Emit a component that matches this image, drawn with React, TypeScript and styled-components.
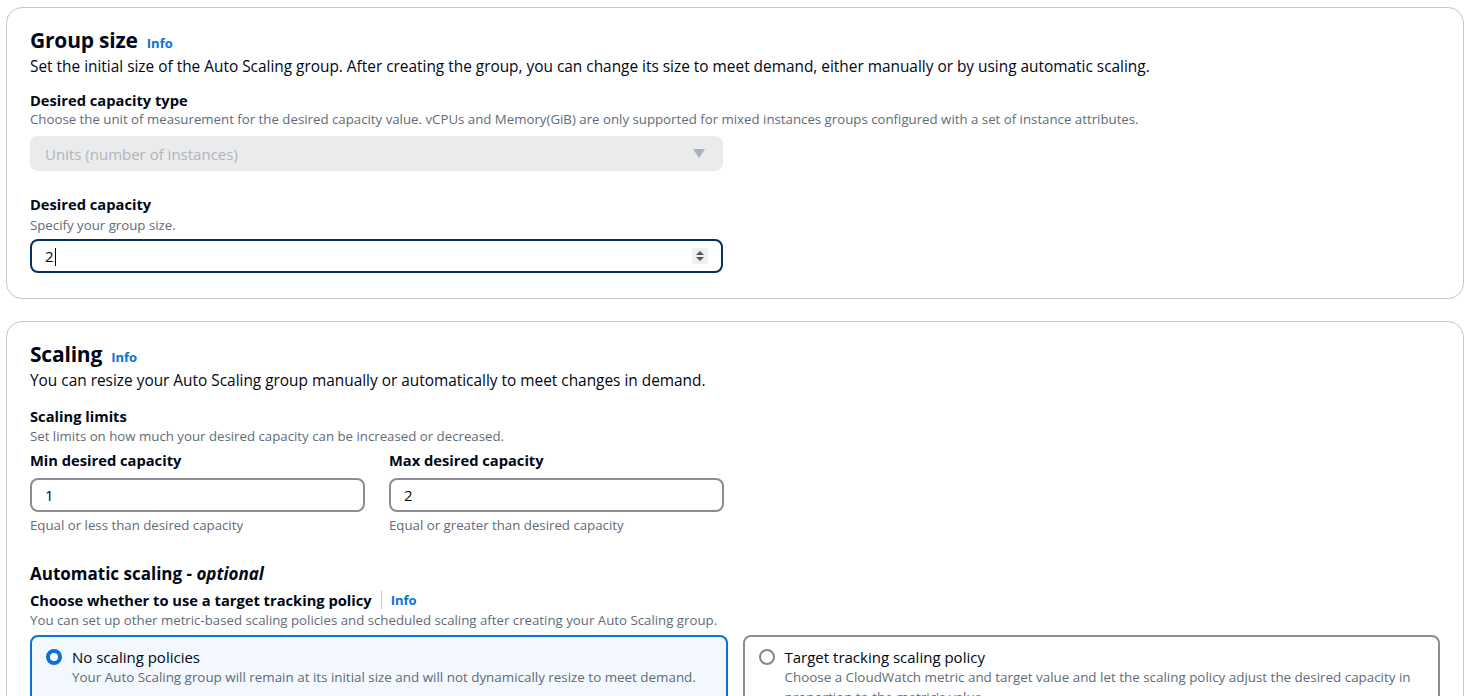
import React from "react";
import styled, { createGlobalStyle } from "styled-components";

const Global = createGlobalStyle`
  html, body {
    margin: 0;
    padding: 0;
    background: #ffffff;
    font-family: "Open Sans", "Liberation Sans", sans-serif;
    color: #000716;
  }
  * { box-sizing: border-box; }
`;

const Page = styled.div`
  padding: 7px 11px 0 6px;
  display: flex;
  flex-direction: column;
  gap: 22px;
  height: 696px;
  overflow: hidden;
`;

const Card = styled.section`
  border: 1px solid #c6c6cd;
  border-radius: 16px;
  padding: 19px 23px 25px 23px;
  background: #fff;
  flex-shrink: 0;
`;

const HeadRow = styled.div`
  display: flex;
  align-items: baseline;
  gap: 9px;
`;

const Heading = styled.h2`
  margin: 0;
  font-size: 21px;
  line-height: 26px;
  font-weight: 700;
  letter-spacing: -0.2px;
`;

const InfoLink = styled.a`
  color: #0972d3;
  font-size: 13px;
  font-weight: 700;
  text-decoration: none;
`;

const Desc = styled.p`
  margin: 4px 0 0;
  font-size: 15.4px;
  line-height: 20px;
  color: #000716;
`;

const Field = styled.div<{ $mt?: number }>`
  margin-top: ${(p) => p.$mt ?? 0}px;
  display: flex;
  flex-direction: column;
`;

const Label = styled.div`
  font-size: 14.7px;
  font-weight: 700;
  line-height: 20px;
  display: flex;
  align-items: center;
`;

const Hint = styled.div<{ $mb?: number; $mt?: number }>`
  font-size: 13.25px;
  line-height: 19px;
  color: #5f6b7a;
  margin-top: ${(p) => p.$mt ?? 0}px;
  margin-bottom: ${(p) => p.$mb ?? 0}px;
`;

const Select = styled.div`
  width: 693px;
  height: 35px;
  background: #e9ebed;
  border-radius: 8px;
  display: flex;
  align-items: center;
  justify-content: space-between;
  padding: 0 18px 0 15px;
  font-size: 15px;
  color: #b4b4bb;
`;

const Caret = styled.span`
  width: 0;
  height: 0;
  border-left: 6px solid transparent;
  border-right: 6px solid transparent;
  border-top: 9px solid #9ba7b6;
  opacity: 0.85;
`;

const Input = styled.div<{ $focused?: boolean; $w: number }>`
  width: ${(p) => p.$w}px;
  height: 34px;
  border: 2px solid ${(p) => (p.$focused ? "#033160" : "#8c8c94")};
  border-radius: 8px;
  display: flex;
  align-items: center;
  justify-content: space-between;
  padding: 0 13px 0 13px;
  font-size: 15px;
  color: #000716;
`;

const Cursor = styled.span`
  display: inline-block;
  width: 1px;
  height: 18px;
  background: #000;
  margin-left: 1px;
  vertical-align: middle;
`;

const Spinner = styled.span`
  width: 16px;
  height: 16px;
  background: #efefef;
  display: flex;
  flex-direction: column;
  align-items: center;
  justify-content: center;
  gap: 2px;
`;

const Tri = styled.span<{ $up?: boolean }>`
  width: 0;
  height: 0;
  border-left: 4px solid transparent;
  border-right: 4px solid transparent;
  ${(p) => (p.$up ? "border-bottom: 4px solid #555;" : "border-top: 4px solid #555;")}
`;

const Row = styled.div`
  display: flex;
  gap: 24px;
  margin-top: 4px;
`;

const SubHeading = styled.div`
  margin-top: 28px;
  font-size: 17px;
  font-weight: 700;
  line-height: 22px;
  em { font-weight: 700; }
`;

const Divider = styled.span`
  display: inline-block;
  width: 1px;
  height: 18px;
  background: #c6c6cd;
  margin: 0 9px 0 9px;
`;

const Tiles = styled.div`
  display: grid;
  grid-template-columns: 1fr 1fr;
  gap: 15px;
  margin-top: 5px;
`;

const Tile = styled.div<{ $selected?: boolean }>`
  border: 2px solid ${(p) => (p.$selected ? "#0972d3" : "#8c8c94")};
  background: ${(p) => (p.$selected ? "#f2f8fd" : "#fff")};
  border-radius: 8px;
  padding: 10px 14px 14px 14px;
  height: 90px;
  display: flex;
  gap: 10px;
`;

const Radio = styled.span<{ $checked?: boolean }>`
  flex-shrink: 0;
  width: 16px;
  height: 16px;
  margin-top: 2px;
  border-radius: 50%;
  border: ${(p) => (p.$checked ? "4.5px solid #0972d3" : "2px solid #7d8998")};
  background: #fff;
`;

const TileText = styled.div`
  display: flex;
  flex-direction: column;
`;

const TileLabel = styled.div`
  font-size: 15px;
  line-height: 20px;
`;

const TileDesc = styled.div`
  font-size: 13.4px;
  line-height: 20px;
  color: #5f6b7a;
`;

const Constraint = styled(Hint)`
  margin-top: 4px;
`;

export default function App() {
  return (
    <>
      <Global />
      <Page>
        <Card>
          <HeadRow>
            <Heading>Group size</Heading>
            <InfoLink>Info</InfoLink>
          </HeadRow>
          <Desc>
            Set the initial size of the Auto Scaling group. After creating the group, you can change its size to
            meet demand, either manually or by using automatic scaling.
          </Desc>
          <Field $mt={13}>
            <Label>Desired capacity type</Label>
            <Hint $mb={7}>
              Choose the unit of measurement for the desired capacity value. vCPUs and Memory(GiB) are only supported
              for mixed instances groups configured with a set of instance attributes.
            </Hint>
            <Select>
              <span>Units (number of instances)</span>
              <Caret />
            </Select>
          </Field>
          <Field $mt={23}>
            <Label>Desired capacity</Label>
            <Hint $mt={2} $mb={4}>
              Specify your group size.
            </Hint>
            <Input $focused $w={693}>
              <span>
                2<Cursor />
              </span>
              <Spinner>
                <Tri $up />
                <Tri />
              </Spinner>
            </Input>
          </Field>
        </Card>

        <Card>
          <HeadRow>
            <Heading>Scaling</Heading>
            <InfoLink>Info</InfoLink>
          </HeadRow>
          <Desc>You can resize your Auto Scaling group manually or automatically to meet changes in demand.</Desc>
          <Field $mt={15}>
            <Label>Scaling limits</Label>
            <Hint $mt={1}>Set limits on how much your desired capacity can be increased or decreased.</Hint>
          </Field>
          <Row>
            <Field>
              <Label>Min desired capacity</Label>
              <Field $mt={8}>
                <Input $w={335}>1</Input>
              </Field>
              <Constraint>Equal or less than desired capacity</Constraint>
            </Field>
            <Field>
              <Label>Max desired capacity</Label>
              <Field $mt={8}>
                <Input $w={335}>2</Input>
              </Field>
              <Constraint>Equal or greater than desired capacity</Constraint>
            </Field>
          </Row>
          <SubHeading>
            Automatic scaling - <em>optional</em>
          </SubHeading>
          <Field $mt={5}>
            <Label>
              Choose whether to use a target tracking policy
              <Divider />
              <InfoLink>Info</InfoLink>
            </Label>
            <Hint $mt={1}>
              You can set up other metric-based scaling policies and scheduled scaling after creating your Auto Scaling
              group.
            </Hint>
          </Field>
          <Tiles>
            <Tile $selected>
              <Radio $checked />
              <TileText>
                <TileLabel>No scaling policies</TileLabel>
                <TileDesc>
                  Your Auto Scaling group will remain at its initial size and will not dynamically resize to meet
                  demand.
                </TileDesc>
              </TileText>
            </Tile>
            <Tile>
              <Radio />
              <TileText>
                <TileLabel>Target tracking scaling policy</TileLabel>
                <TileDesc>
                  Choose a CloudWatch metric and target value and let the scaling policy adjust the desired capacity in
                  proportion to the metric's value.
                </TileDesc>
              </TileText>
            </Tile>
          </Tiles>
        </Card>
      </Page>
    </>
  );
}
